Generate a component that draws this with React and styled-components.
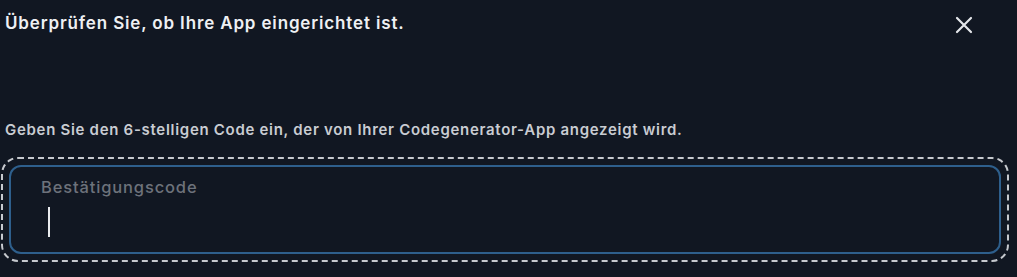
import React from 'react';
import styled, { createGlobalStyle } from 'styled-components';

const GlobalStyle = createGlobalStyle`
    html, body {
        margin: 0;
        padding: 0;
        background: #111722;
    }
    body {
        font-family: Inter, "Noto Sans", "Liberation Sans", sans-serif;
        -webkit-font-smoothing: antialiased;
    }
`;

const Dialog = styled.div`
    width: 1017px;
    height: 277px;
    box-sizing: border-box;
    padding: 0 8px 0 5px;
    display: flex;
    flex-direction: column;
    background: #111722;
    overflow: hidden;
`;

const Header = styled.div`
    height: 46px;
    display: flex;
    align-items: center;
    justify-content: space-between;
`;

const Title = styled.h2`
    margin: 0;
    font-size: 17px;
    font-weight: 600;
    color: #eef0f3;
    letter-spacing: 0.85px;
`;

const CloseButton = styled.button`
    width: 32px;
    height: 32px;
    margin-right: 29px;
    margin-top: 4px;
    border: none;
    background: transparent;
    padding: 0;
    display: flex;
    align-items: center;
    justify-content: center;
    color: #e4e6ea;
    cursor: pointer;
`;

const Hint = styled.p`
    margin: 74px 0 0;
    font-size: 15px;
    line-height: 20px;
    font-weight: 600;
    color: #c9ccd2;
    letter-spacing: 0.7px;
`;

const FocusRing = styled.div`
    margin: 17px 0 0 -4px;
    padding: 6px;
    border: 2px dashed #c6c9ce;
    border-radius: 17px;
`;

const Field = styled.div`
    height: 89px;
    box-sizing: border-box;
    border: 2px solid #2e5f8c;
    border-radius: 12px;
    background: #111722;
    padding: 10px 30px;
    display: flex;
    flex-direction: column;
    gap: 10px;
`;

const Label = styled.span`
    font-size: 16.5px;
    line-height: 20px;
    font-weight: 500;
    color: #6d727b;
    letter-spacing: 0.85px;
`;

const Caret = styled.span`
    display: block;
    width: 2px;
    height: 30px;
    margin-left: 7px;
    background: #e9ebee;
`;

export default function App() {
    return (
        <>
            <GlobalStyle />
            <Dialog>
                <Header>
                    <Title>Überprüfen Sie, ob Ihre App eingerichtet ist.</Title>
                    <CloseButton aria-label="Schließen">
                        <svg width="18" height="18" viewBox="0 0 18 18" fill="none">
                            <path d="M2 2L16 16M16 2L2 16" stroke="currentColor" strokeWidth="2.2" strokeLinecap="round" />
                        </svg>
                    </CloseButton>
                </Header>
                <Hint>Geben Sie den 6-stelligen Code ein, der von Ihrer Codegenerator-App angezeigt wird.</Hint>
                <FocusRing>
                    <Field>
                        <Label>Bestätigungscode</Label>
                        <Caret />
                    </Field>
                </FocusRing>
            </Dialog>
        </>
    );
}
